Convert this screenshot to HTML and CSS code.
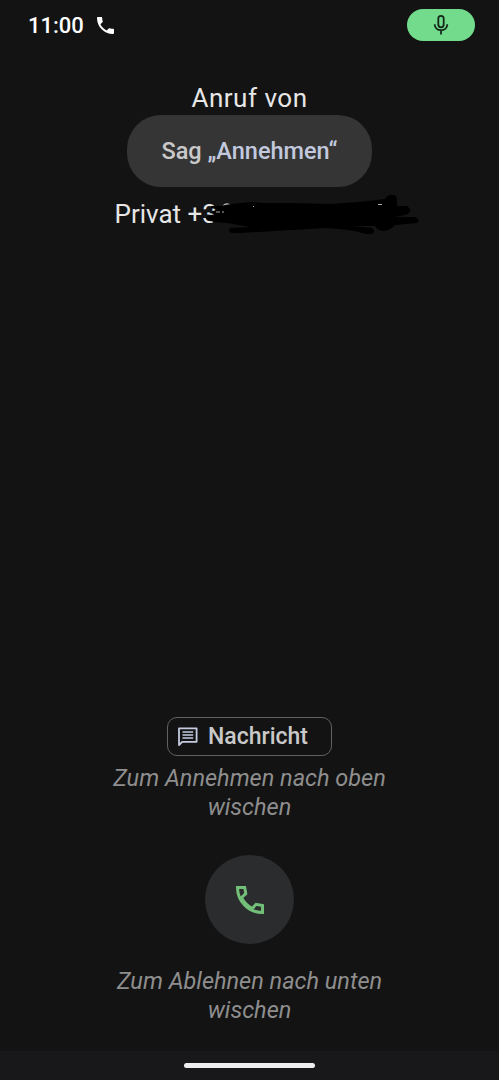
FILE: index.html
```html
<!DOCTYPE html>
<html lang="de">
<head>
<meta charset="utf-8">
<title>Anruf</title>
<link rel="stylesheet" href="styles.css">
</head>
<body>
<div class="screen">
  <header class="status">
    <span class="clock">11:00</span>
    <svg class="status-call" viewBox="3 3 18 18"><path fill="#fff" d="M6.62 10.79c1.44 2.83 3.76 5.14 6.59 6.59l2.2-2.2c.27-.27.67-.36 1.02-.24 1.12.37 2.33.57 3.57.57.55 0 1 .45 1 1V20c0 .55-.45 1-1 1C10.610 21 3 13.390 3 4c0-.55.45-1 1-1h3.500c.55 0 1 .45 1 1 0 1.250.2 2.450.57 3.570.11.35.03.740-.25 1.020l-2.200 2.200z"/></svg>
    <span class="mic">
      <svg width="16" height="22" viewBox="0 0 16 22" fill="none" stroke="#15291b" stroke-width="1.800"><rect x="5.300" y="1.800" width="5.400" height="11.500" rx="2.700"/><path d="M1.700 10.200c0 3.600 2.700 6 6.300 6s6.300-2.400 6.300-6M8 16.200v4.300"/></svg>
    </span>
  </header>
  <main class="call">
    <h1 class="title"><span>Anruf von</span></h1>
    <div class="hint"><span class="hint-text">Sag <span class="keyword">„Annehmen“</span></span></div>
    <div class="caller">
      <span class="caller-text">Privat +3</span>
      <svg class="scribble" width="230" height="50" viewBox="195 190 230 50">
        <path d="M222 206q4-4 8 0" fill="none" stroke="#bbb" stroke-width="1.500"/>
        <path d="M210 206L219 206 230 204 250 202 262 203 290 203 330 204 358 202 384 199Q387 194 393 195 396 196 396 201L396 206 406 206Q412 210 407 214L399 216 394 217 414 217Q420 220 416 223L394 225Q389 231 381 231 376 230 374 226L351 226 371 228Q375 231 371 234 367 235 358 232 345 229 325 228L290 230 240 233 230 233Q226 230 230 228L249 227 226 223 212 222 205 219 206 216 214 214 208 213 211 211 218 210 210 208Z"/>
        <path d="M215 212h4M221 212h2M209 222h3M377 204.500h4M252 206.500h1" stroke="#aaa" stroke-width="1.200"/>
      </svg>
    </div>
  </main>
  <section class="actions">
    <button class="message">
      <svg width="20" height="20" viewBox="0 0 20 20" fill="none" stroke="#c4cbe0" stroke-width="1.800"><path d="M1 18V1.300h17.600v13.500H4.200L1 18z" stroke-linejoin="round"/><path d="M4.500 5h10.700M4.500 8h10.700M4.500 11h10.700" stroke-width="1.500"/></svg>
      <span class="message-text">Nachricht</span>
    </button>
    <p class="swipe"><span class="accept">Zum Annehmen nach oben</span><br><span class="last">wischen</span></p>
    <div class="puck">
      <svg width="28" height="28" viewBox="0 0 28 28" fill="none" stroke="#72c078" stroke-width="3"><path d="M1.500 1.500H8.700L9.800 7.700 5.400 11.700C8.400 17 11.400 19.800 16.200 22.600L20.100 18.300 26.500 19.400V26.500C12.500 26.500 1.500 15.500 1.500 1.500z"/></svg>
    </div>
    <p class="swipe"><span class="decline">Zum Ablehnen nach unten</span><br><span class="last">wischen</span></p>
  </section>
  <footer class="nav"><span class="handle"></span></footer>
</div>
</body>
</html>
```
FILE: styles.css
```css
* { box-sizing: border-box; }
body { margin: 0; background: #131313; font-family: Roboto, "Noto Sans", sans-serif; }
.screen { width: 499px; height: 1080px; display: flex; flex-direction: column; background: #131313; overflow: hidden; }
.status { height: 50px; padding: 0 24px 0 28px; display: flex; align-items: center; }
.clock { font-size: 22px; font-weight: 500; color: #fff; width: 69px; letter-spacing: 0; white-space: nowrap; }
.status-call { width: 17px; height: 17px; }
.mic { margin-left: auto; width: 68px; height: 32px; border-radius: 16px; background: #72dc8c; display: flex; align-items: center; justify-content: center; }
.call { padding-top: 31px; display: flex; flex-direction: column; align-items: center; }
.title { margin: 0; font-size: 26px; line-height: 34px; font-weight: 400; color: #e6e6e6; letter-spacing: 0.5px; }
.hint { width: 245px; height: 72px; border-radius: 34px; background: #353535; display: flex; align-items: center; justify-content: center; font-size: 23.5px; font-weight: 500; color: #c9c9c9; }
.hint-text { white-space: nowrap; }
.keyword { color: #c2c9de; }
.caller { position: relative; width: 270px; margin-top: 10px; font-size: 26px; line-height: 34px; color: #e6e6e6; white-space: nowrap; }
.scribble { position: absolute; left: 81px; top: -7px; }
.actions { margin-top: auto; display: flex; flex-direction: column; align-items: center; }
.message { width: 165px; height: 39px; padding: 0 0 0 10px; border: 1px solid #626262; border-radius: 10px; background: transparent; display: flex; align-items: center; gap: 10px; font: 500 23px Roboto, sans-serif; color: #c9c9c9; }
.swipe { margin: 8px 0 0; font-size: 23.5px; line-height: 29px; font-style: italic; text-align: center; color: #8e8e8e; white-space: nowrap; }
.puck { width: 89px; height: 89px; margin: 33px 0 15px; border-radius: 50%; background: #2b2c2e; display: flex; align-items: center; justify-content: center; }
.nav { height: 29px; margin-top: 26px; background: #18181a; display: flex; align-items: center; justify-content: center; }
.handle { width: 131px; height: 5px; border-radius: 3px; background: #eee; }
```
